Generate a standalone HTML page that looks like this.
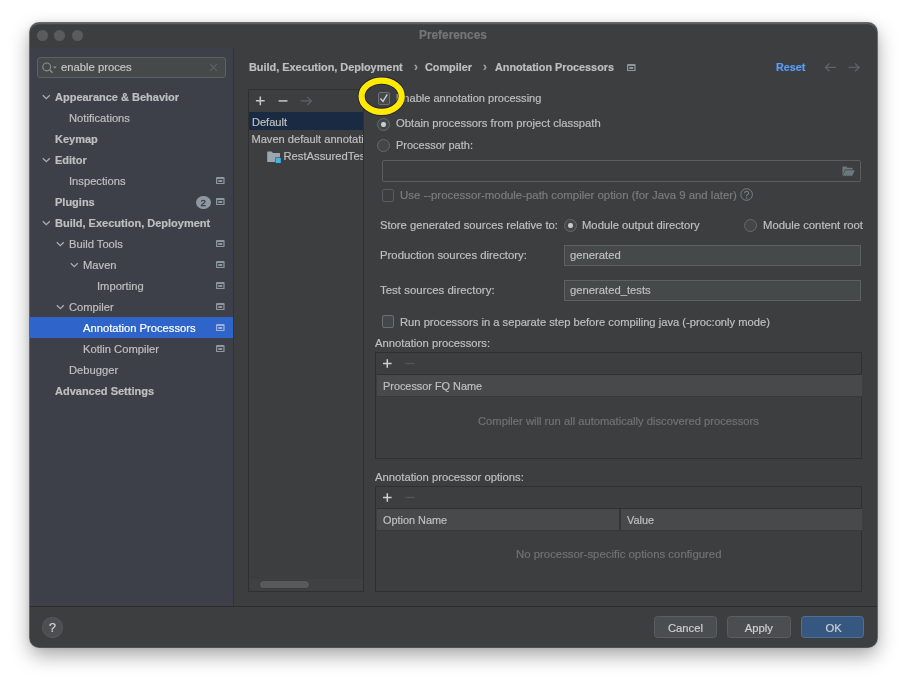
<!DOCTYPE html>
<html><head><meta charset="utf-8">
<style>
*{box-sizing:border-box;margin:0;padding:0}
html,body{width:907px;height:684px;background:#fff;overflow:hidden;font-family:"Liberation Sans",sans-serif;}
.a{position:absolute;white-space:nowrap}
body>div.a{will-change:transform}
</style></head><body>
<div class="a" style="left:30.2px;top:22.6px;width:846.6999999999999px;height:624.0px;border-radius:9px;background:#3d3e40;box-shadow:0 0 0 0.9px rgba(0,0,0,.55),0 8px 20px rgba(0,0,0,.36),0 0 6px rgba(0,0,0,.10);"></div>
<div class="a" style="left:30.2px;top:22.6px;width:846.70px;height:24.90px;background:#3d3e40;border-radius:9px 9px 0 0;box-shadow:inset 0 1.2px 0.6px rgba(120,124,128,.55)"></div>
<div class="a" style="left:36.9px;top:29.499999999999996px;width:10.60px;height:10.60px;background:#5b5b5d;border-radius:50%;"></div>
<div class="a" style="left:54.4px;top:29.499999999999996px;width:10.60px;height:10.60px;background:#5b5b5d;border-radius:50%;"></div>
<div class="a" style="left:71.9px;top:29.499999999999996px;width:10.60px;height:10.60px;background:#5b5b5d;border-radius:50%;"></div>
<div class="a" style="left:419.30px;top:27.99px;font-size:11.85px;line-height:14px;font-weight:bold;color:#757577;-webkit-text-stroke:0.2px #757577;">Preferences</div>
<div class="a" style="left:30.2px;top:47.5px;width:202.80px;height:558.50px;background:#3d4048;"></div>
<div class="a" style="left:233px;top:47.5px;width:1.00px;height:558.50px;background:#323335;"></div>
<div class="a" style="left:37.2px;top:57.2px;width:188.50px;height:20.70px;background:#45494a;border:1px solid #5e6162;border-radius:3px;"></div>
<svg class="a" style="left:41.5px;top:60.5px" width="22" height="14" viewBox="0 0 22 14">
  <circle cx="4.7" cy="5.9" r="3.9" fill="none" stroke="#8a9095" stroke-width="1.15"/>
  <line x1="7.5" y1="8.7" x2="10.6" y2="11.8" stroke="#8a9095" stroke-width="1.3"/>
  <path d="M11 5.6 L14.6 5.6 L12.8 7.8 Z" fill="#8a9095"/>
</svg>
<div class="a" style="left:61.20px;top:60.00px;font-size:11.25px;line-height:14px;font-weight:normal;color:#c4c4c4;-webkit-text-stroke:0.2px #c4c4c4;">enable proces</div>
<svg class="a" style="left:209px;top:62.5px" width="9" height="9" viewBox="0 0 9 9">
  <path d="M1.2 1.2 L7.8 7.8 M7.8 1.2 L1.2 7.8" stroke="#5f6467" stroke-width="1.1"/>
</svg>
<svg class="a" style="left:41.90px;top:92.50px" width="9" height="8" viewBox="0 0 9 8"><path d="M0.8 2.2 L4.3 5.7 L7.8 2.2" fill="none" stroke="#a9adb3" stroke-width="1.3"/></svg>
<div class="a" style="left:55.30px;top:90.39px;font-size:11px;line-height:14px;font-weight:bold;color:#bfbfbf;-webkit-text-stroke:0.2px #bfbfbf;">Appearance &amp; Behavior</div>
<div class="a" style="left:69.30px;top:111.32px;font-size:11.2px;line-height:14px;font-weight:normal;color:#bfbfbf;-webkit-text-stroke:0.2px #bfbfbf;">Notifications</div>
<div class="a" style="left:55.30px;top:132.39px;font-size:11px;line-height:14px;font-weight:bold;color:#bfbfbf;-webkit-text-stroke:0.2px #bfbfbf;">Keymap</div>
<svg class="a" style="left:41.90px;top:155.50px" width="9" height="8" viewBox="0 0 9 8"><path d="M0.8 2.2 L4.3 5.7 L7.8 2.2" fill="none" stroke="#a9adb3" stroke-width="1.3"/></svg>
<div class="a" style="left:55.30px;top:153.39px;font-size:11px;line-height:14px;font-weight:bold;color:#bfbfbf;-webkit-text-stroke:0.2px #bfbfbf;">Editor</div>
<div class="a" style="left:69.30px;top:174.32px;font-size:11.2px;line-height:14px;font-weight:normal;color:#bfbfbf;-webkit-text-stroke:0.2px #bfbfbf;">Inspections</div>
<svg class="a" style="left:216.00px;top:177.25px" width="9" height="8" viewBox="0 0 9 8"><rect x="0" y="0" width="8.6" height="7.1" rx="0.9" fill="#8c97a0"/><rect x="1.25" y="2.1" width="6.1" height="3.9" rx="0.3" fill="#3d4048"/><rect x="2.1" y="3.1" width="4.4" height="1.9" rx=".9" fill="#8c97a0"/></svg>
<div class="a" style="left:55.30px;top:195.39px;font-size:11px;line-height:14px;font-weight:bold;color:#bfbfbf;-webkit-text-stroke:0.2px #bfbfbf;">Plugins</div>
<svg class="a" style="left:216.00px;top:198.25px" width="9" height="8" viewBox="0 0 9 8"><rect x="0" y="0" width="8.6" height="7.1" rx="0.9" fill="#8c97a0"/><rect x="1.25" y="2.1" width="6.1" height="3.9" rx="0.3" fill="#3d4048"/><rect x="2.1" y="3.1" width="4.4" height="1.9" rx=".9" fill="#8c97a0"/></svg>
<div class="a" style="left:196px;top:196.10px;width:14.5px;height:13.4px;border-radius:50%;background:#8e98a2;color:#353840;font-size:9.8px;line-height:13.8px;text-align:center;-webkit-text-stroke:0.3px #353840">2</div>
<svg class="a" style="left:41.90px;top:218.50px" width="9" height="8" viewBox="0 0 9 8"><path d="M0.8 2.2 L4.3 5.7 L7.8 2.2" fill="none" stroke="#a9adb3" stroke-width="1.3"/></svg>
<div class="a" style="left:55.30px;top:216.39px;font-size:11px;line-height:14px;font-weight:bold;color:#bfbfbf;-webkit-text-stroke:0.2px #bfbfbf;">Build, Execution, Deployment</div>
<svg class="a" style="left:55.90px;top:239.50px" width="9" height="8" viewBox="0 0 9 8"><path d="M0.8 2.2 L4.3 5.7 L7.8 2.2" fill="none" stroke="#a9adb3" stroke-width="1.3"/></svg>
<div class="a" style="left:69.30px;top:237.32px;font-size:11.2px;line-height:14px;font-weight:normal;color:#bfbfbf;-webkit-text-stroke:0.2px #bfbfbf;">Build Tools</div>
<svg class="a" style="left:216.00px;top:240.25px" width="9" height="8" viewBox="0 0 9 8"><rect x="0" y="0" width="8.6" height="7.1" rx="0.9" fill="#8c97a0"/><rect x="1.25" y="2.1" width="6.1" height="3.9" rx="0.3" fill="#3d4048"/><rect x="2.1" y="3.1" width="4.4" height="1.9" rx=".9" fill="#8c97a0"/></svg>
<svg class="a" style="left:69.90px;top:260.50px" width="9" height="8" viewBox="0 0 9 8"><path d="M0.8 2.2 L4.3 5.7 L7.8 2.2" fill="none" stroke="#a9adb3" stroke-width="1.3"/></svg>
<div class="a" style="left:83.30px;top:258.32px;font-size:11.2px;line-height:14px;font-weight:normal;color:#bfbfbf;-webkit-text-stroke:0.2px #bfbfbf;">Maven</div>
<svg class="a" style="left:216.00px;top:261.25px" width="9" height="8" viewBox="0 0 9 8"><rect x="0" y="0" width="8.6" height="7.1" rx="0.9" fill="#8c97a0"/><rect x="1.25" y="2.1" width="6.1" height="3.9" rx="0.3" fill="#3d4048"/><rect x="2.1" y="3.1" width="4.4" height="1.9" rx=".9" fill="#8c97a0"/></svg>
<div class="a" style="left:97.30px;top:279.32px;font-size:11.2px;line-height:14px;font-weight:normal;color:#bfbfbf;-webkit-text-stroke:0.2px #bfbfbf;">Importing</div>
<svg class="a" style="left:216.00px;top:282.25px" width="9" height="8" viewBox="0 0 9 8"><rect x="0" y="0" width="8.6" height="7.1" rx="0.9" fill="#8c97a0"/><rect x="1.25" y="2.1" width="6.1" height="3.9" rx="0.3" fill="#3d4048"/><rect x="2.1" y="3.1" width="4.4" height="1.9" rx=".9" fill="#8c97a0"/></svg>
<svg class="a" style="left:55.90px;top:302.50px" width="9" height="8" viewBox="0 0 9 8"><path d="M0.8 2.2 L4.3 5.7 L7.8 2.2" fill="none" stroke="#a9adb3" stroke-width="1.3"/></svg>
<div class="a" style="left:69.30px;top:300.32px;font-size:11.2px;line-height:14px;font-weight:normal;color:#bfbfbf;-webkit-text-stroke:0.2px #bfbfbf;">Compiler</div>
<svg class="a" style="left:216.00px;top:303.25px" width="9" height="8" viewBox="0 0 9 8"><rect x="0" y="0" width="8.6" height="7.1" rx="0.9" fill="#8c97a0"/><rect x="1.25" y="2.1" width="6.1" height="3.9" rx="0.3" fill="#3d4048"/><rect x="2.1" y="3.1" width="4.4" height="1.9" rx=".9" fill="#8c97a0"/></svg>
<div class="a" style="left:30.2px;top:317.0px;width:202.80px;height:21.30px;background:#2f65ca;"></div>
<div class="a" style="left:83.30px;top:321.32px;font-size:11.2px;line-height:14px;font-weight:normal;color:#ffffff;-webkit-text-stroke:0.2px #ffffff;">Annotation Processors</div>
<svg class="a" style="left:216.00px;top:324.25px" width="9" height="8" viewBox="0 0 9 8"><rect x="0" y="0" width="8.6" height="7.1" rx="0.9" fill="#9fb0d6"/><rect x="1.25" y="2.1" width="6.1" height="3.9" rx="0.3" fill="#2f65ca"/><rect x="2.1" y="3.1" width="4.4" height="1.9" rx=".9" fill="#9fb0d6"/></svg>
<div class="a" style="left:83.30px;top:342.32px;font-size:11.2px;line-height:14px;font-weight:normal;color:#bfbfbf;-webkit-text-stroke:0.2px #bfbfbf;">Kotlin Compiler</div>
<svg class="a" style="left:216.00px;top:345.25px" width="9" height="8" viewBox="0 0 9 8"><rect x="0" y="0" width="8.6" height="7.1" rx="0.9" fill="#8c97a0"/><rect x="1.25" y="2.1" width="6.1" height="3.9" rx="0.3" fill="#3d4048"/><rect x="2.1" y="3.1" width="4.4" height="1.9" rx=".9" fill="#8c97a0"/></svg>
<div class="a" style="left:69.30px;top:363.32px;font-size:11.2px;line-height:14px;font-weight:normal;color:#bfbfbf;-webkit-text-stroke:0.2px #bfbfbf;">Debugger</div>
<div class="a" style="left:55.30px;top:384.39px;font-size:11px;line-height:14px;font-weight:bold;color:#bfbfbf;-webkit-text-stroke:0.2px #bfbfbf;">Advanced Settings</div>
<div class="a" style="left:234px;top:47.5px;width:642.90px;height:558.50px;background:#3d3e40;"></div>
<div class="a" style="left:248.60px;top:60.32px;font-size:10.9px;line-height:14px;font-weight:bold;color:#bfbfbf;-webkit-text-stroke:0.2px #bfbfbf;">Build, Execution, Deployment</div>
<div class="a" style="left:413.80px;top:60.14px;font-size:12px;line-height:14px;font-weight:bold;color:#a0a0a0;-webkit-text-stroke:0.2px #a0a0a0;">&#8250;</div>
<div class="a" style="left:425.30px;top:60.34px;font-size:10.84px;line-height:14px;font-weight:bold;color:#bfbfbf;-webkit-text-stroke:0.2px #bfbfbf;">Compiler</div>
<div class="a" style="left:482.60px;top:60.14px;font-size:12px;line-height:14px;font-weight:bold;color:#a0a0a0;-webkit-text-stroke:0.2px #a0a0a0;">&#8250;</div>
<div class="a" style="left:494.60px;top:60.35px;font-size:10.82px;line-height:14px;font-weight:bold;color:#bfbfbf;-webkit-text-stroke:0.2px #bfbfbf;">Annotation Processors</div>
<svg class="a" style="left:627.00px;top:64.05px" width="9" height="8" viewBox="0 0 9 8"><rect x="0" y="0" width="8.6" height="7.1" rx="0.9" fill="#8c97a0"/><rect x="1.25" y="2.1" width="6.1" height="3.9" rx="0.3" fill="#3d3e40"/><rect x="2.1" y="3.1" width="4.4" height="1.9" rx=".9" fill="#8c97a0"/></svg>
<div class="a" style="left:776.10px;top:60.06px;font-size:10.79px;line-height:14px;font-weight:bold;color:#589df6;-webkit-text-stroke:0.2px #589df6;">Reset</div>
<svg class="a" style="left:824px;top:61px" width="38" height="13" viewBox="0 0 38 13"><path d="M1.4 6.4 H12 M5.4 2.5 L1.4 6.4 L5.4 10.3" fill="none" stroke="#606164" stroke-width="1.4"/><path d="M24.5 6.4 H35.1 M31.1 2.5 L35.1 6.4 L31.1 10.3" fill="none" stroke="#606164" stroke-width="1.4"/></svg>
<div class="a" style="left:248px;top:89px;width:115.80px;height:503.00px;background:#3d3e40;border:1px solid #2f3032;"></div>
<svg class="a" style="left:254px;top:94px" width="60" height="14" viewBox="0 0 60 14"><path d="M6.3 2.4 V11.2 M1.9 6.8 H10.7" stroke="#c8c8c8" stroke-width="1.5"/><path d="M24.6 6.9 H33.5" stroke="#c8c8c8" stroke-width="1.5"/><path d="M46.6 6.9 H57.4 M53.3 2.9 L57.3 6.9 L53.3 10.9" fill="none" stroke="#5f6063" stroke-width="1.3"/></svg>
<div class="a" style="left:249px;top:111.9px;width:113.80px;height:17.80px;background:#1a2a43;"></div>
<div class="a" style="left:252.20px;top:114.87px;font-size:11.05px;line-height:14px;font-weight:normal;color:#bfbfbf;-webkit-text-stroke:0.2px #bfbfbf;">Default</div>
<div class="a" style="left:249.7px;top:130px;width:113px;height:40px;overflow:hidden">
<div class="a" style="left:1.40px;top:1.75px;font-size:11.12px;line-height:14px;font-weight:normal;color:#bfbfbf;-webkit-text-stroke:0.2px #bfbfbf;">Maven default annotation profile</div>
<svg class="a" style="left:17px;top:20.5px" width="15" height="13" viewBox="0 0 15 13"><path d="M0.2 1 Q0.2 0.4 0.8 0.4 H4.6 L6 1.9 H12.4 Q13 1.9 13 2.5 V10.4 Q13 11 12.4 11 H0.8 Q0.2 11 0.2 10.4 Z" fill="#9aa7b0"/><rect x="8.3" y="6.4" width="5.6" height="5.6" fill="#3d3e40"/><rect x="8.8" y="7" width="5" height="5" fill="#40b6e0"/></svg>
<div class="a" style="left:33.40px;top:18.90px;font-size:11.25px;line-height:14px;font-weight:normal;color:#bfbfbf;-webkit-text-stroke:0.2px #bfbfbf;">RestAssuredTest</div>
</div>
<div class="a" style="left:249.7px;top:578.9px;width:113.10px;height:11.30px;background:#404143;"></div>
<div class="a" style="left:259.8px;top:581.3px;width:48.80px;height:7.20px;background:#58595b;border-radius:4px;box-shadow:0 0 0 0.6px #38393b"></div>
<div class="a" style="left:377.8px;top:92.3px;width:12.3px;height:12.5px;border:1px solid #6b6f70;background:#43494a;border-radius:2px"></div>
<svg class="a" style="left:377.8px;top:92.3px" width="13" height="13" viewBox="0 0 13 13"><path d="M2.4 6.5 L5 9.3 L9.3 2.4" fill="none" stroke="#cdcdcd" stroke-width="1.4"/></svg>
<div class="a" style="left:395.80px;top:91.17px;font-size:11.04px;line-height:14px;font-weight:normal;color:#bfbfbf;-webkit-text-stroke:0.2px #bfbfbf;">Enable annotation processing</div>
<div class="a" style="left:377.05px;top:117.70px;width:13.2px;height:13.2px;border:1px solid #656b6a;background:#424848;border-radius:50%"></div>
<div class="a" style="left:381.35px;top:122.00px;width:4.6px;height:4.6px;background:#cdcdcd;border-radius:50%"></div>
<div class="a" style="left:395.80px;top:116.49px;font-size:11.27px;line-height:14px;font-weight:normal;color:#bfbfbf;-webkit-text-stroke:0.2px #bfbfbf;">Obtain processors from project classpath</div>
<div class="a" style="left:376.95px;top:138.70px;width:13.2px;height:13.2px;border:1px solid #656b6a;background:#424848;border-radius:50%"></div>
<div class="a" style="left:395.80px;top:138.09px;font-size:10.99px;line-height:14px;font-weight:normal;color:#bfbfbf;-webkit-text-stroke:0.2px #bfbfbf;">Processor path:</div>
<div class="a" style="left:382px;top:160px;width:479.00px;height:21.50px;background:#3d3e40;border:1px solid #5b5d5f;border-radius:2px;"></div>
<svg class="a" style="left:841.8px;top:166.2px" width="14" height="10.2" viewBox="0 0 15 11"><path d="M0.4 0.6 H4.6 L5.8 1.8 H11.4 V3.8 H3.2 L0.4 10.4 Z" fill="#6d787d"/><path d="M3.6 4.6 H13.8 L11 10.4 H0.8 Z" fill="#6d787d"/></svg>
<div class="a" style="left:382px;top:188.7px;width:12.3px;height:12.5px;border:1px solid #5a5d5f;background:#3d3e40;border-radius:2px"></div>
<div class="a" style="left:399.80px;top:188.15px;font-size:11.4px;line-height:14px;font-weight:normal;color:#7c7c7c;-webkit-text-stroke:0.2px #7c7c7c;">Use --processor-module-path compiler option (for Java 9 and later)</div>
<svg class="a" style="left:740px;top:188.3px" width="14" height="14" viewBox="0 0 14 14"><circle cx="6.6" cy="6.5" r="5.8" fill="none" stroke="#76828a" stroke-width="1"/><path d="M4.6 5.2 Q4.6 3.2 6.6 3.2 Q8.6 3.2 8.6 5 Q8.6 6.2 7.4 6.8 Q6.6 7.2 6.6 8.3" fill="none" stroke="#76828a" stroke-width="1.1"/><circle cx="6.6" cy="9.9" r="0.7" fill="#76828a"/></svg>
<div class="a" style="left:379.60px;top:217.71px;font-size:11.24px;line-height:14px;font-weight:normal;color:#bfbfbf;-webkit-text-stroke:0.2px #bfbfbf;">Store generated sources relative to:</div>
<div class="a" style="left:563.75px;top:218.60px;width:13.2px;height:13.2px;border:1px solid #656b6a;background:#424848;border-radius:50%"></div>
<div class="a" style="left:568.05px;top:222.90px;width:4.6px;height:4.6px;background:#cdcdcd;border-radius:50%"></div>
<div class="a" style="left:582.20px;top:217.90px;font-size:11.25px;line-height:14px;font-weight:normal;color:#bfbfbf;-webkit-text-stroke:0.2px #bfbfbf;">Module output directory</div>
<div class="a" style="left:744.25px;top:218.60px;width:13.2px;height:13.2px;border:1px solid #656b6a;background:#424848;border-radius:50%"></div>
<div class="a" style="left:762.80px;top:217.88px;font-size:11.31px;line-height:14px;font-weight:normal;color:#bfbfbf;-webkit-text-stroke:0.2px #bfbfbf;">Module content root</div>
<div class="a" style="left:379.60px;top:247.77px;font-size:11.35px;line-height:14px;font-weight:normal;color:#bfbfbf;-webkit-text-stroke:0.2px #bfbfbf;">Production sources directory:</div>
<div class="a" style="left:564.3px;top:244.7px;width:297.20px;height:21.00px;background:#45494a;border:1px solid #5e6162;"></div>
<div class="a" style="left:569.80px;top:247.80px;font-size:11.25px;line-height:14px;font-weight:normal;color:#bfbfbf;-webkit-text-stroke:0.2px #bfbfbf;">generated</div>
<div class="a" style="left:379.60px;top:282.53px;font-size:11.46px;line-height:14px;font-weight:normal;color:#bfbfbf;-webkit-text-stroke:0.2px #bfbfbf;">Test sources directory:</div>
<div class="a" style="left:564.3px;top:279.7px;width:297.20px;height:20.90px;background:#45494a;border:1px solid #5e6162;"></div>
<div class="a" style="left:569.80px;top:282.70px;font-size:11.25px;line-height:14px;font-weight:normal;color:#bfbfbf;-webkit-text-stroke:0.2px #bfbfbf;">generated_tests</div>
<div class="a" style="left:382px;top:314.8px;width:12.3px;height:12.5px;border:1px solid #6b6f70;background:#43494a;border-radius:2px"></div>
<div class="a" style="left:399.70px;top:314.82px;font-size:11.2px;line-height:14px;font-weight:normal;color:#bfbfbf;-webkit-text-stroke:0.2px #bfbfbf;">Run processors in a separate step before compiling java (-proc:only mode)</div>
<div class="a" style="left:375.30px;top:336.30px;font-size:11.25px;line-height:14px;font-weight:normal;color:#bfbfbf;-webkit-text-stroke:0.2px #bfbfbf;">Annotation processors:</div>
<div class="a" style="left:375px;top:352.09999999999997px;width:487.40px;height:107.20px;background:#3d3e40;border:1px solid #2f3032;"></div>
<svg class="a" style="left:381px;top:357.20px" width="40" height="14" viewBox="0 0 40 14"><path d="M6.3 2.2 V10.8 M2 6.5 H10.6" stroke="#cfcfcf" stroke-width="1.5"/><path d="M24.3 6.5 H33.6" stroke="#555658" stroke-width="1.3"/></svg>
<div class="a" style="left:376.7px;top:374.2px;width:484.70px;height:1.00px;background:#2f3032;"></div>
<div class="a" style="left:376.7px;top:375.2px;width:484.70px;height:20.80px;background:#47494b;"></div>
<div class="a" style="left:376.7px;top:396.0px;width:484.70px;height:1.00px;background:#38393b;"></div>
<div class="a" style="left:383.20px;top:379.43px;font-size:10.88px;line-height:14px;font-weight:normal;color:#bfbfbf;-webkit-text-stroke:0.2px #bfbfbf;">Processor FQ Name</div>
<div class="a" style="left:477.90px;top:413.72px;font-size:11.21px;line-height:14px;font-weight:normal;color:#727272;-webkit-text-stroke:0.2px #727272;">Compiler will run all automatically discovered processors</div>
<div class="a" style="left:375.30px;top:469.80px;font-size:11.25px;line-height:14px;font-weight:normal;color:#bfbfbf;-webkit-text-stroke:0.2px #bfbfbf;">Annotation processor options:</div>
<div class="a" style="left:375px;top:485.9px;width:487.40px;height:106.10px;background:#3d3e40;border:1px solid #2f3032;"></div>
<svg class="a" style="left:381px;top:491.00px" width="40" height="14" viewBox="0 0 40 14"><path d="M6.3 2.2 V10.8 M2 6.5 H10.6" stroke="#cfcfcf" stroke-width="1.5"/><path d="M24.3 6.5 H33.6" stroke="#555658" stroke-width="1.3"/></svg>
<div class="a" style="left:376.7px;top:508.0px;width:484.70px;height:1.00px;background:#2f3032;"></div>
<div class="a" style="left:376.7px;top:509.0px;width:484.70px;height:20.80px;background:#47494b;"></div>
<div class="a" style="left:376.7px;top:529.8px;width:484.70px;height:1.00px;background:#38393b;"></div>
<div class="a" style="left:383.20px;top:513.23px;font-size:10.88px;line-height:14px;font-weight:normal;color:#bfbfbf;-webkit-text-stroke:0.2px #bfbfbf;">Option Name</div>
<div class="a" style="left:627.10px;top:513.23px;font-size:10.88px;line-height:14px;font-weight:normal;color:#bfbfbf;-webkit-text-stroke:0.2px #bfbfbf;">Value</div>
<div class="a" style="left:619px;top:509px;width:1.50px;height:20.80px;background:#353638;"></div>
<div class="a" style="left:515.90px;top:546.66px;font-size:11.38px;line-height:14px;font-weight:normal;color:#727272;-webkit-text-stroke:0.2px #727272;">No processor-specific options configured</div>
<div class="a" style="left:30.2px;top:606px;width:846.70px;height:1.00px;background:#2c2d2e;"></div>
<div class="a" style="left:30.2px;top:607px;width:846.70px;height:39.60px;background:#3d3e40;border-radius:0 0 9px 9px;"></div>
<div class="a" style="left:42.2px;top:616.5px;width:20.6px;height:20.6px;border-radius:50%;background:#4b4f51;border:1px solid #575b5d"></div>
<div class="a" style="left:48.60px;top:620.67px;font-size:12.5px;line-height:14px;font-weight:normal;color:#d4d4d4;-webkit-text-stroke:0.2px #d4d4d4;">?</div>
<div class="a" style="left:653.8px;top:616.1px;width:62.90px;height:21.5px;border-radius:3.5px;background:#4a4e50;border:1px solid #5a5e60"></div>
<div class="a" style="left:653.8px;top:620.50px;width:62.90px;text-align:center;font-size:11.25px;line-height:14px;color:#cfcfcf;-webkit-text-stroke:0.2px #cfcfcf;padding-left:0px">Cancel</div>
<div class="a" style="left:727.3px;top:616.1px;width:63.50px;height:21.5px;border-radius:3.5px;background:#4a4e50;border:1px solid #5a5e60"></div>
<div class="a" style="left:727.3px;top:620.50px;width:63.50px;text-align:center;font-size:11.25px;line-height:14px;color:#cfcfcf;-webkit-text-stroke:0.2px #cfcfcf;padding-left:0px">Apply</div>
<div class="a" style="left:800.8px;top:616.1px;width:63.40px;height:21.5px;border-radius:3.5px;background:#365880;border:1px solid #4c709a"></div>
<div class="a" style="left:800.8px;top:620.50px;width:63.40px;text-align:center;font-size:11.25px;line-height:14px;color:#cfcfcf;-webkit-text-stroke:0.2px #cfcfcf;padding-left:2px">OK</div>
<svg class="a" style="left:350px;top:70px" width="64" height="52" viewBox="0 0 64 52"><ellipse cx="31.65" cy="26.2" rx="20.05" ry="15.65" fill="none" stroke="rgba(22,26,48,.75)" stroke-width="8"/><ellipse cx="31.65" cy="26.2" rx="20.05" ry="15.65" fill="none" stroke="#ffea00" stroke-width="6.2"/></svg>
</body></html>
